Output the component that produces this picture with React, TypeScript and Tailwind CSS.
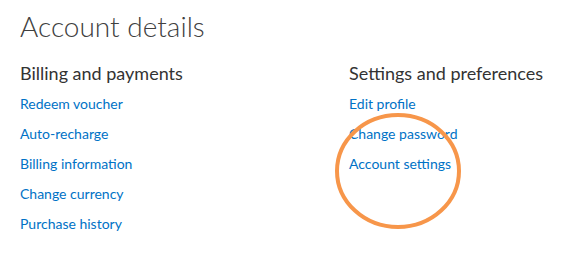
const billing = [
  "Redeem voucher",
  "Auto-recharge",
  "Billing information",
  "Change currency",
  "Purchase history",
];

const settings = ["Edit profile", "Change password", "Account settings"];

function LinkList({ items }: { items: string[] }) {
  return (
    <ul className="mt-[3px] flex flex-col">
      {items.map((item) => (
        <li key={item} className="h-[30px] leading-[30px]">
          <a href="#" className="text-[14px] text-[#0072c6]">
            {item}
          </a>
        </li>
      ))}
    </ul>
  );
}

export default function App() {
  return (
    <div
      className="relative h-[263px] w-[566px] overflow-hidden bg-white pl-5 text-[#333]"
      style={{ fontFamily: 'Lato, "Open Sans", sans-serif' }}
    >
      <h1 className="pt-[4px] text-[28px] font-light leading-[44px] text-[#404040]">
        Account details
      </h1>
      <div className="mt-[13px] grid grid-cols-[329px_1fr]">
        <section>
          <h2 className="text-[18px] leading-[24px] text-[#333]">
            Billing and payments
          </h2>
          <LinkList items={billing} />
        </section>
        <section>
          <h2 className="text-[18px] leading-[24px] text-[#333]">
            Settings and preferences
          </h2>
          <LinkList items={settings} />
        </section>
      </div>
      <svg
        className="pointer-events-none absolute left-[330px] top-[108px]"
        width="136"
        height="128"
        viewBox="0 0 136 128"
      >
        <ellipse
          cx="68"
          cy="63"
          rx="61"
          ry="56"
          fill="none"
          stroke="#f7964a"
          strokeWidth="4"
        />
      </svg>
    </div>
  );
}
